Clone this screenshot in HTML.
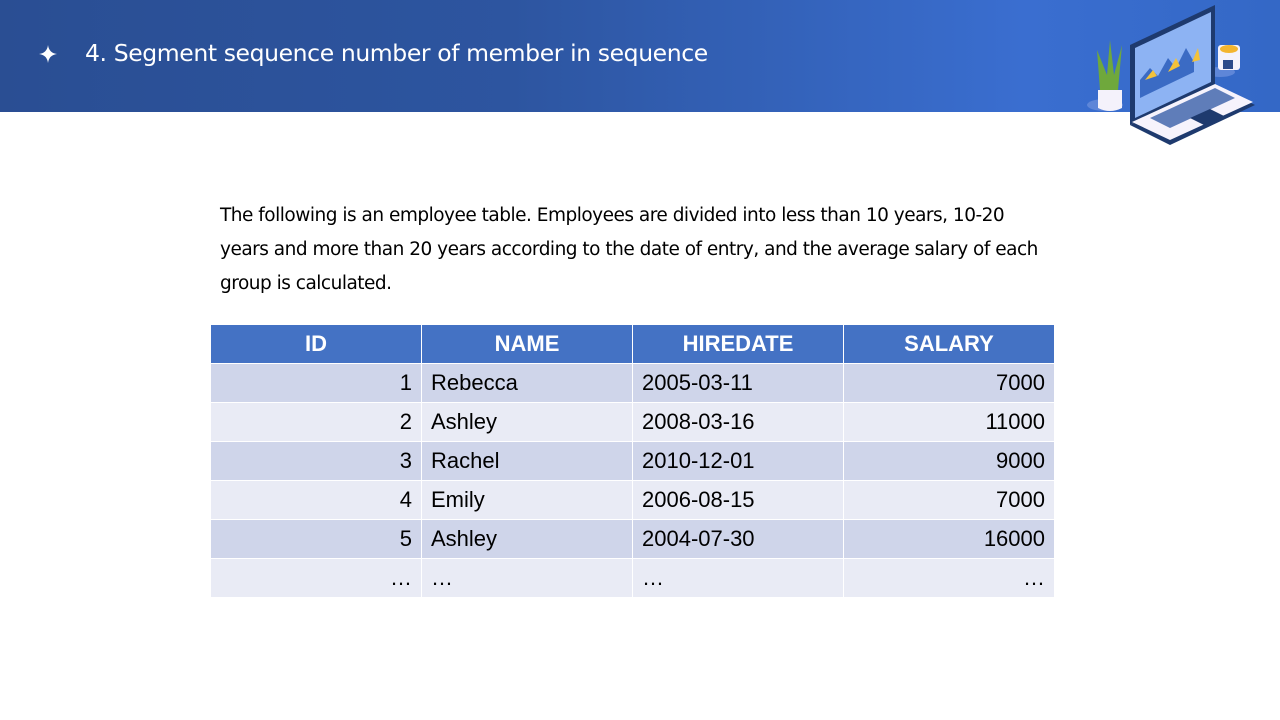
<!DOCTYPE html>
<html><head><meta charset="utf-8"><style>
body{margin:0;width:1280px;height:720px;position:relative;background:#fff;font-family:"Liberation Sans",sans-serif;overflow:hidden}
.hd{position:absolute;left:0;top:0;width:1280px;height:112px;background:linear-gradient(90deg,#2a4e93 0%,#2d55a0 40%,#3a6ed0 80%,#3468c6 100%)}
.title{position:absolute;left:85px;top:39px;color:#fff;font-size:23.5px;font-family:"DejaVu Sans","Liberation Sans",sans-serif;letter-spacing:-0.4px;white-space:nowrap}
.star{position:absolute;left:39px;top:45px}
.p{position:absolute;left:220px;top:199px;width:825px;font-size:18.5px;line-height:34px;color:#000;font-family:"DejaVu Sans","Liberation Sans",sans-serif;letter-spacing:-0.5px}
table{position:absolute;left:210px;top:324px;border-collapse:collapse;table-layout:fixed;width:845px}
td{height:39px;padding:0 9px;font-size:22px;border:1px solid #fff;box-sizing:border-box}
th{height:39px;background:#4472c4;color:#fff;font-size:22px;border:1px solid #fff;font-weight:bold;box-sizing:border-box}
tr.o td{background:#cfd5ea}tr.e td{background:#e9ebf5}
.r{text-align:right}
</style></head><body>
<div class="hd"></div>
<svg class="star" width="18" height="18" viewBox="0 0 18 18"><path d="M9 0 Q10 8 18 9 Q10 10 9 18 Q8 10 0 9 Q8 8 9 0Z" fill="#fff"/></svg>
<div class="title">4. Segment sequence number of member in sequence</div>
<svg style="position:absolute;left:1080px;top:0" width="200" height="145" viewBox="0 0 200 145">
<ellipse cx="25" cy="105" rx="18" ry="6" fill="#5e86d8"/>
<path d="M18 90h24v18q-12 6-24 0z" fill="#f4f2fb"/>
<path d="M20 90l-3-40 10 25 3-35 4 35 8-30-4 45z" fill="#6fa83c"/>
<ellipse cx="140" cy="72" rx="15" ry="5" fill="#5e86d8"/>
<rect x="138" y="45" width="22" height="25" rx="3" fill="#f4f2fb"/>
<ellipse cx="149" cy="49" rx="9" ry="4" fill="#f3b52f"/>
<rect x="143" y="60" width="10" height="9" fill="#2b4a8a"/>
<path d="M50 45l85-40v80l-85 40z" fill="#1e3a6e"/>
<path d="M55 48l76-36v70l-76 36z" fill="#8db3f3"/>
<path d="M60 80l10-12 8 8 10-18 8 10 10-20 8 14 v10l-54 26z" fill="#3b6bc4"/>
<path d="M65 80l8-10 4 6zM88 72l8-14 4 8zM112 62l6-14 2 12z" fill="#f3c23a"/>
<path d="M50 125l85-40 40 20-85 40z" fill="#1e3a6e"/>
<path d="M52 122l83-38 38 18-83 38z" fill="#f6f3fc"/>
<path d="M70 118l65-30 20 10-65 30z" fill="#3a5fa8" opacity=".8"/>
<path d="M110 118l20-9 14 7-20 9z" fill="#1e3a6e"/>
</svg>
<div class="p">The following is an employee table. Employees are divided into less than 10 years, 10-20 years and more than 20 years according to the date of entry, and the average salary of each group is calculated.</div>
<table>
<tr><th>ID</th><th>NAME</th><th>HIREDATE</th><th>SALARY</th></tr>
<tr class="o"><td class="r">1</td><td>Rebecca</td><td>2005-03-11</td><td class="r">7000</td></tr>
<tr class="e"><td class="r">2</td><td>Ashley</td><td>2008-03-16</td><td class="r">11000</td></tr>
<tr class="o"><td class="r">3</td><td>Rachel</td><td>2010-12-01</td><td class="r">9000</td></tr>
<tr class="e"><td class="r">4</td><td>Emily</td><td>2006-08-15</td><td class="r">7000</td></tr>
<tr class="o"><td class="r">5</td><td>Ashley</td><td>2004-07-30</td><td class="r">16000</td></tr>
<tr class="e"><td class="r">…</td><td>…</td><td>…</td><td class="r">…</td></tr>
</table>
</body></html>
